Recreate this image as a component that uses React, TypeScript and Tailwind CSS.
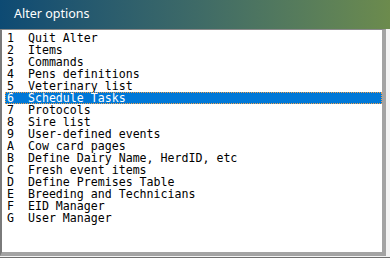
const items: [string, string][] = [
  ["1", "Quit Alter"],
  ["2", "Items"],
  ["3", "Commands"],
  ["4", "Pens definitions"],
  ["5", "Veterinary list"],
  ["6", "Schedule Tasks"],
  ["7", "Protocols"],
  ["8", "Sire list"],
  ["9", "User-defined events"],
  ["A", "Cow card pages"],
  ["B", "Define Dairy Name, HerdID, etc"],
  ["C", "Fresh event items"],
  ["D", "Define Premises Table"],
  ["E", "Breeding and Technicians"],
  ["F", "EID Manager"],
  ["G", "User Manager"],
];

export default function App() {
  const selected = "6";

  return (
    <div className="w-[390px] h-[258px] flex flex-col bg-[#f3f3f3] border-b border-[#6f6f6f] overflow-hidden">
      <div className="h-[29px] shrink-0 flex items-center pl-[14px] bg-gradient-to-r from-[#0d4a73] via-[#3e6a67] to-[#6c8b4d]">
        <span className="text-white text-[12.5px] font-['Noto_Sans',sans-serif]">
          Alter options
        </span>
      </div>
      <div className="flex-1 flex pr-[4px] pb-[1px]">
        <div className="flex-1 flex flex-col bg-white border-t border-t-[#8a8a8a] border-l-2 border-l-[#7a7a7a] border-r-[4px] border-r-[#a3a3a3] border-b-[4px] border-b-[#a3a3a3] pl-[3px] pt-[2px]">
          {items.map(([key, label]) => {
            const active = key === selected;
            return (
              <div
                key={key}
                className={
                  active
                    ? "h-[12px] leading-[12px] pl-[2px] whitespace-pre text-[11.6px] font-['DejaVu_Sans_Mono',monospace] bg-[#0078d7] text-white outline outline-1 outline-dotted outline-[#f0a24e] -outline-offset-1"
                    : "h-[12px] leading-[12px] pl-[2px] whitespace-pre text-[11.6px] font-['DejaVu_Sans_Mono',monospace] text-black"
                }
              >
                {key + "  " + label}
              </div>
            );
          })}
        </div>
      </div>
    </div>
  );
}
